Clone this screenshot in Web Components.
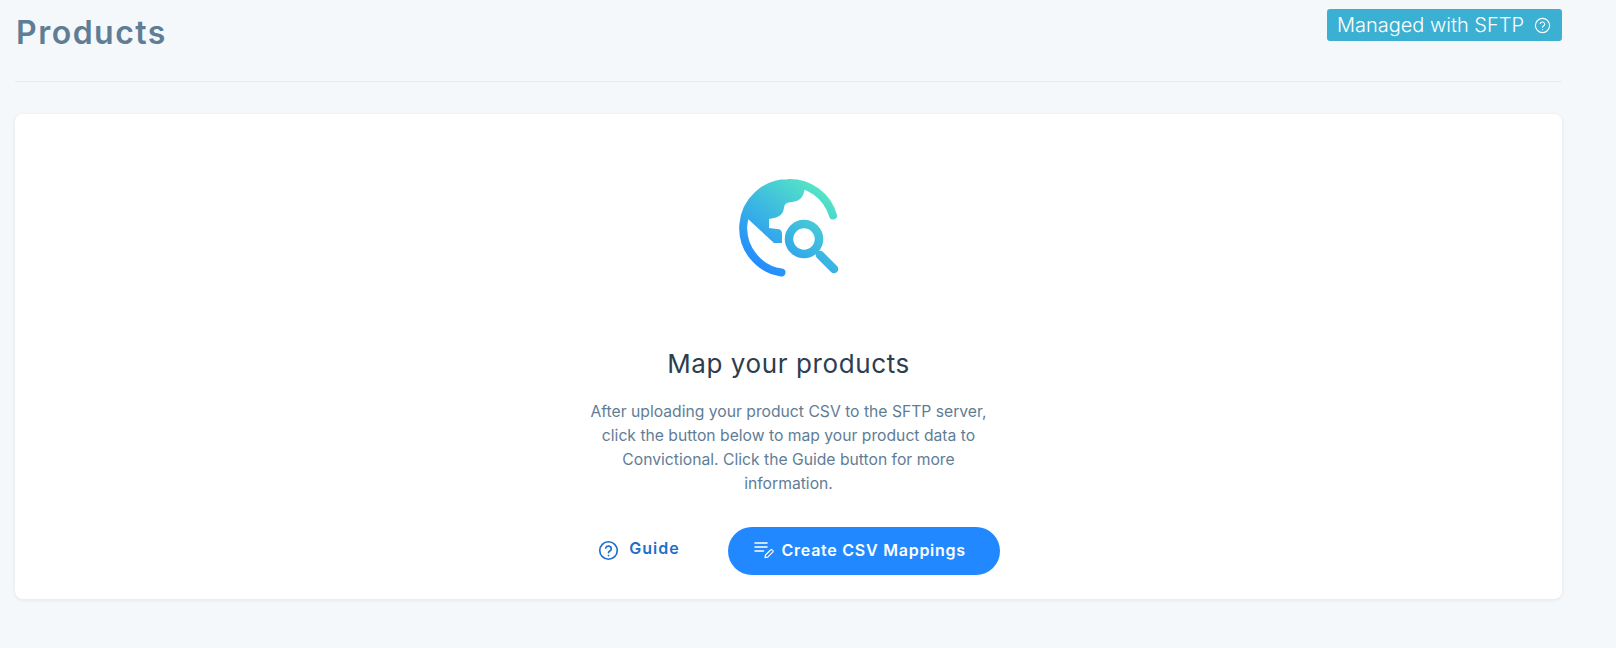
<!DOCTYPE html>
<html lang="en">
<head>
<meta charset="utf-8">
<title>Products</title>
<style>
    html, body { margin: 0; background: #f4f8fb; }
    body { font-family: "Inter", "Liberation Sans", sans-serif; }
</style>
</head>
<body>
<products-page></products-page>

<script>
const HELP_ICON = `<svg viewBox="0 0 24 24" fill="none" stroke="currentColor" stroke-width="2" stroke-linecap="round" stroke-linejoin="round">
    <circle cx="12" cy="12" r="10"></circle>
    <path d="M8.800 9.200a3.300 3.300 0 0 1 6.400 1c0 2.200-3.200 2.500-3.200 4.300"></path>
    <path d="M12 17.800v.1"></path>
</svg>`;

class SftpBadge extends HTMLElement {
    constructor() {
        super();
        this.attachShadow({ mode: "open" }).innerHTML = `
        <style>
            :host {
                display: inline-flex;
                align-items: center;
                box-sizing: border-box;
                height: 32px;
                margin-top: 9px;
                padding: 0 11px 0 10px;
                gap: 10px;
                background-color: #3bb0d3;
                border-radius: 3px;
                color: #fff;
                font-size: 20px;
                font-weight: 300;
                white-space: nowrap;
            }
            svg { width: 17px; height: 17px; stroke-width: 1.6; }
        </style>
        <slot></slot>${HELP_ICON}`;
    }
}

class PageHeader extends HTMLElement {
    constructor() {
        super();
        this.attachShadow({ mode: "open" }).innerHTML = `
        <style>
            :host {
                display: flex;
                justify-content: space-between;
                align-items: flex-start;
                height: 81px;
                border-bottom: 1px solid #e5ecf1;
            }
            h1 {
                margin: 12px 0 0 1px;
                font-size: 32px;
                line-height: 42px;
                font-weight: 600;
                letter-spacing: 1.5px;
                color: #5f7d95;
            }
        </style>
        <h1><slot name="title"></slot></h1>
        <slot name="action"></slot>`;
    }
}

class GuideLink extends HTMLElement {
    constructor() {
        super();
        this.attachShadow({ mode: "open" }).innerHTML = `
        <style>
            :host {
                display: inline-flex;
                align-items: center;
                gap: 10px;
                padding-bottom: 2px;
                color: #1f6fc9;
                font-size: 16px;
                font-weight: 600;
                letter-spacing: 1px;
                cursor: pointer;
            }
            svg { width: 21px; height: 21px; stroke-width: 1.9; }
            span { padding-bottom: 4px; }
        </style>
        ${HELP_ICON}<span><slot></slot></span>`;
    }
}

class PrimaryButton extends HTMLElement {
    constructor() {
        super();
        this.attachShadow({ mode: "open" }).innerHTML = `
        <style>
            :host {
                display: inline-flex;
                align-items: center;
                justify-content: center;
                box-sizing: border-box;
                width: 272px;
                height: 48px;
                padding: 0 8px 2px 0;
                gap: 8px;
                background-color: #2188ff;
                border-radius: 24px;
                color: #fff;
                font-size: 16px;
                font-weight: 600;
                letter-spacing: 0.75px;
                cursor: pointer;
            }
            svg { width: 20px; height: 20px; }
        </style>
        <svg viewBox="0 0 20 20" fill="none" stroke="#fff" stroke-width="1.5" stroke-linecap="round">
            <path d="M1 3h12M1 7h12M1 11h8.500"></path>
            <path d="M11.500 15l5-5q1-.8 2 .2t.2 2l-5 5-2.700.5z" stroke-width="1.200" stroke-linejoin="round"></path>
        </svg>
        <slot></slot>`;
    }
}

class GlobeSearchIcon extends HTMLElement {
    constructor() {
        super();
        this.attachShadow({ mode: "open" }).innerHTML = `
        <style>
            :host { display: block; width: 104px; height: 104px; margin-left: -1px; }
            svg { display: block; width: 100%; height: 100%; }
        </style>
        <svg viewBox="36 16 104 104" fill="none">
            <defs>
                <linearGradient id="globeGrad" gradientUnits="userSpaceOnUse" x1="58" y1="112" x2="122" y2="30">
                    <stop offset="0" stop-color="#2188ff"></stop>
                    <stop offset="1" stop-color="#55e5c5"></stop>
                </linearGradient>
            </defs>
            <path d="M43 68A45 45 0 0 1 72 26Q88 19 104 26L104.500 30Q103 41 92 42Q84 42 84 48Q83 56 74 58L69 59V68L77 69Q82 69 82 74V83H74L48 59Q43 63 43 68Z" fill="url(#globeGrad)"></path>
            <path d="M81.500 112.500A45 45 0 0 1 88 23A45 45 0 0 1 133 55.500" stroke="url(#globeGrad)" stroke-width="8" stroke-linecap="round"></path>
            <circle cx="104" cy="79" r="15" stroke="url(#globeGrad)" stroke-width="8.500"></circle>
            <path d="M120 95L134 109" stroke="url(#globeGrad)" stroke-width="8.500" stroke-linecap="round"></path>
        </svg>`;
    }
}

class EmptyCard extends HTMLElement {
    constructor() {
        super();
        this.attachShadow({ mode: "open" }).innerHTML = `
        <style>
            :host {
                display: flex;
                flex-direction: column;
                align-items: center;
                box-sizing: border-box;
                height: 485px;
                margin-top: 32px;
                padding-top: 62px;
                background-color: #fff;
                border-radius: 8px;
                box-shadow: 0 1px 4px rgba(0, 0, 0, 0.08);
            }
            h2 {
                margin: 65px 0 0;
                font-size: 26px;
                line-height: 38px;
                font-weight: 400;
                letter-spacing: 0.6px;
                color: #2c3e4f;
            }
            p {
                margin: 17px 0 0;
                width: 410px;
                text-align: center;
                font-size: 15.7px;
                line-height: 24px;
                color: #5f7d95;
            }
            .actions {
                display: flex;
                align-items: center;
                gap: 48px;
                margin-top: 31px;
                padding-left: 21px;
            }
        </style>
        <slot name="icon"></slot>
        <h2><slot name="heading"></slot></h2>
        <p><slot name="body"></slot></p>
        <div class="actions"><slot name="actions"></slot></div>`;
    }
}

class ProductsPage extends HTMLElement {
    constructor() {
        super();
        this.attachShadow({ mode: "open" }).innerHTML = `
        <style>
            :host {
                display: block;
                box-sizing: border-box;
                height: 648px;
                padding: 0 54px 0 15px;
            }
        </style>
        <page-header>
            <span slot="title">Products</span>
            <sftp-badge slot="action">Managed with SFTP</sftp-badge>
        </page-header>
        <empty-card>
            <globe-search-icon slot="icon"></globe-search-icon>
            <span slot="heading">Map your products</span>
            <span slot="body">After uploading your product CSV to the SFTP server, click the button below to map your product data to Convictional. Click the Guide button for more information.</span>
            <guide-link slot="actions">Guide</guide-link>
            <primary-button slot="actions">Create CSV Mappings</primary-button>
        </empty-card>`;
    }
}

customElements.define("sftp-badge", SftpBadge);
customElements.define("page-header", PageHeader);
customElements.define("guide-link", GuideLink);
customElements.define("primary-button", PrimaryButton);
customElements.define("globe-search-icon", GlobeSearchIcon);
customElements.define("empty-card", EmptyCard);
customElements.define("products-page", ProductsPage);
</script>
</body>
</html>
